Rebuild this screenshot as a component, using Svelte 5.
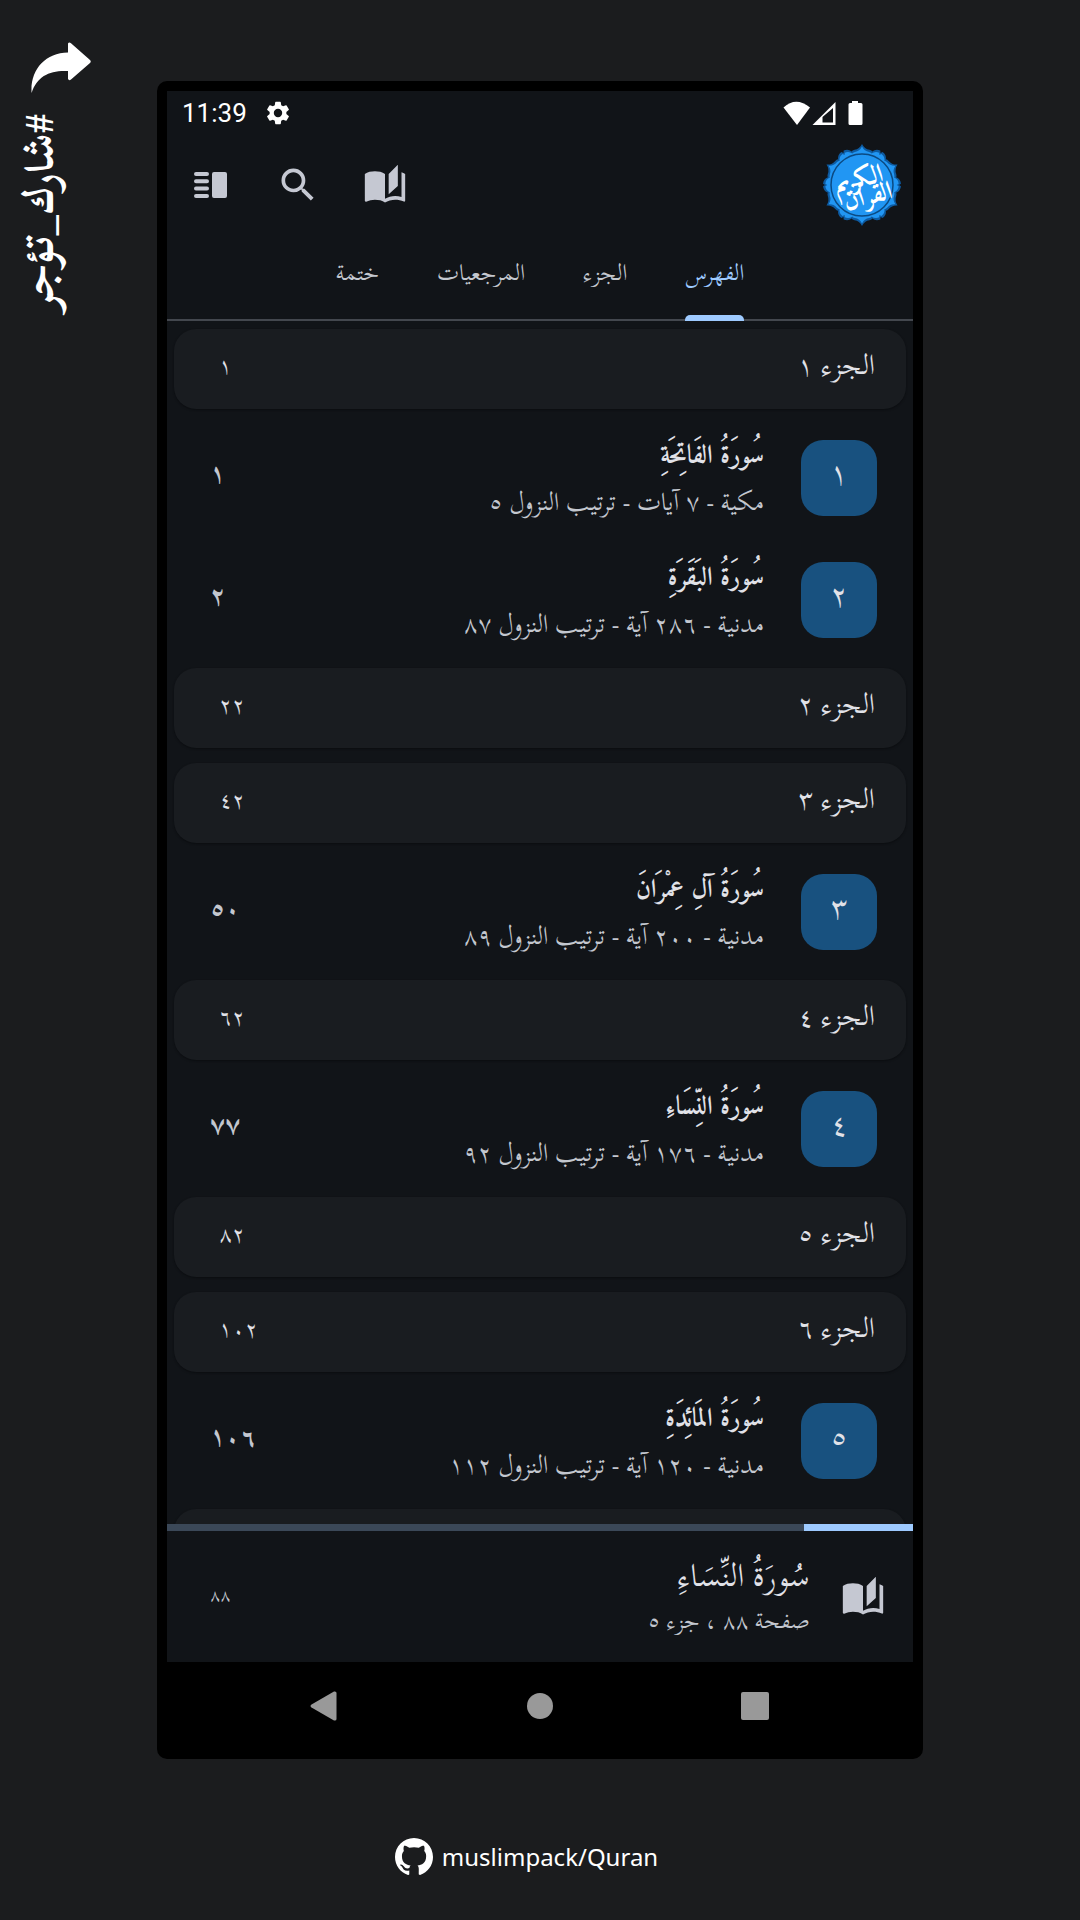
<script>
  const tabs = ['الفهرس', 'الجزء', 'المرجعيات', 'ختمة'];
  let active = $state(0);

  const rows = [
    { juz: '١', page: '١' },
    { no: '١', name: 'سُورَةُ الفَاتِحَةِ', info: 'مكية - ٧ آيات - ترتيب النزول ٥', page: '١' },
    { no: '٢', name: 'سُورَةُ البَقَرَةِ', info: 'مدنية - ٢٨٦ آية - ترتيب النزول ٨٧', page: '٢' },
    { juz: '٢', page: '٢٢' },
    { juz: '٣', page: '٤٢' },
    { no: '٣', name: 'سُورَةُ آلِ عِمْرَانَ', info: 'مدنية - ٢٠٠ آية - ترتيب النزول ٨٩', page: '٥٠' },
    { juz: '٤', page: '٦٢' },
    { no: '٤', name: 'سُورَةُ النِّسَاءِ', info: 'مدنية - ١٧٦ آية - ترتيب النزول ٩٢', page: '٧٧' },
    { juz: '٥', page: '٨٢' },
    { juz: '٦', page: '١٠٢' },
    { no: '٥', name: 'سُورَةُ المَائِدَةِ', info: 'مدنية - ١٢٠ آية - ترتيب النزول ١١٢', page: '١٠٦' }
  ];

  // Six-pointed ornamental outline of the emblem, scaled by k.
  function emblem(k) {
    const at = (deg, r) => {
      const a = ((deg - 90) * Math.PI) / 180;
      return `${(Math.cos(a) * r * k).toFixed(2)} ${(Math.sin(a) * r * k).toFixed(2)}`;
    };
    let d = `M${at(0, 41)}`;
    for (let i = 0; i < 6; i++) {
      const b = i * 60;
      d += `Q${at(b + 4, 36)} ${at(b + 12, 36)}Q${at(b + 16, 36)} ${at(b + 17, 35)}`;
      d += `Q${at(b + 21, 39)} ${at(b + 28, 39)}L${at(b + 30, 37)}L${at(b + 32, 39)}Q${at(b + 39, 39)} ${at(b + 43, 35)}`;
      d += `Q${at(b + 44, 36)} ${at(b + 48, 36)}Q${at(b + 56, 36)} ${at(b + 60, 41)}`;
    }
    return d + 'Z';
  }
</script>

{#snippet book()}
  <svg class="icon" viewBox="0 0 24 24" aria-hidden="true">
    <path d="M19 1l-5 5v11l5-4.5V1zM1 6v14.65c0 .25.25.5.5.5.1 0 .15-.05.25-.05C3.1 20.45 5.05 20 6.5 20c1.95 0 4.05.4 5.5 1.5V6c-1.45-1.1-3.55-1.5-5.5-1.5S2.45 4.9 1 6zm22 13.5V6c-.6-.45-1.25-.75-2-1v13.5c-1.1-.35-2.3-.5-3.5-.5-1.7 0-4.15.65-5.5 1.5v2c1.35-.85 3.8-1.5 5.5-1.5 1.65 0 3.35.3 4.75 1.05.1.05.15.05.25.05.25 0 .5-.25.5-.5z" />
  </svg>
{/snippet}

<div class="page">
  <aside class="share">
    <svg viewBox="0 0 60 52" class="arrow" aria-hidden="true">
      <path d="M37 1.500Q38-.3 40 1.200L59 18Q60.500 19.500 59 21L40 37.500Q38 39 37 37V29C19 28 6 34 .6 51C-1 28 14 11 37 10.500Z" />
    </svg>
    <p class="hashtag" dir="rtl">#شارك_تؤجر</p>
  </aside>

  <main class="phone">
    <div class="screen">
      <div class="status">
        <time>11:39</time>
        <svg class="gear" viewBox="0 0 24 24" aria-hidden="true">
          <path d="M19.140 12.940c.04-.3.060-.61.060-.94 0-.32-.02-.64-.07-.94l2.030-1.580a.49.49 0 0 0 .12-.61l-1.920-3.320a.49.49 0 0 0-.59-.22l-2.390.96c-.5-.38-1.030-.7-1.620-.94l-.36-2.540a.48.48 0 0 0-.48-.41h-3.840c-.24 0-.43.17-.47.41l-.36 2.540c-.59.24-1.130.57-1.620.94l-2.390-.96a.48.48 0 0 0-.59.22L2.740 8.870c-.12.210-.08.470.12.610l2.030 1.580c-.05.3-.09.63-.09.940s.02.640.07.940l-2.030 1.580a.49.49 0 0 0-.12.610l1.920 3.320c.12.220.37.290.59.220l2.390-.96c.5.380 1.030.7 1.620.940l.36 2.540c.05.240.24.410.48.410h3.840c.24 0 .44-.17.470-.41l.36-2.540c.59-.24 1.130-.56 1.620-.94l2.390.960c.22.080.47 0 .59-.22l1.920-3.320a.48.48 0 0 0-.12-.61zM12 15.600a3.600 3.600 0 1 1 0-7.200 3.600 3.600 0 0 1 0 7.200z" />
        </svg>
        <svg class="signals" viewBox="0 0 80 24" aria-hidden="true">
          <path d="M14 24L.5 6.500Q13-5 27 6.500Z" />
          <path fill-rule="evenodd" d="M52.500 1V24H29.500ZM50 7L39.500 16V21.500H50Z" />
          <path d="M69 0h6v2h3q1.500 0 1.500 1.500v19q0 1.500-1.500 1.500h-11q-1.500 0-1.500-1.500v-19q0-1.500 1.500-1.500h2z" />
        </svg>
      </div>

      <header class="appbar">
        <button aria-label="لوحة جانبية">
          <svg class="icon" viewBox="0 0 44 44" aria-hidden="true">
            <path d="M7 9h11a2 2 0 0 1 0 4H7a2 2 0 0 1 0-4zm0 7.300h11a2 2 0 0 1 0 4H7a2 2 0 0 1 0-4zm0 7.300h11a2 2 0 0 1 0 4H7a2 2 0 0 1 0-4zm0 7.300h11a2 2 0 0 1 0 4H7a2 2 0 0 1 0-4zM25 9h11a2 2 0 0 1 2 2v22a2 2 0 0 1-2 2H25a2 2 0 0 1-2-2V11a2 2 0 0 1 2-2z" />
          </svg>
        </button>
        <button aria-label="بحث">
          <svg class="icon" viewBox="0 0 24 24" aria-hidden="true">
            <path d="M9.500 3A6.500 6.500 0 0 1 16 9.500c0 1.610-.59 3.090-1.560 4.230l.27.270h.79l5 5-1.500 1.500-5-5v-.79l-.27-.27A6.516 6.516 0 0 1 9.500 16a6.500 6.500 0 0 1 0-13m0 2C7 5 5 7 5 9.500S7 14 9.500 14 14 12 14 9.500 12 5 9.500 5z" />
          </svg>
        </button>
        <button aria-label="المصحف">{@render book()}</button>
        <svg class="logo" viewBox="-42 -42 84 84" role="img" aria-label="القرآن الكريم">
          <path d={emblem(1)} fill="#0d5aa0" />
          <path d={emblem(0.94)} fill="#2196f3" />
          <circle r="31" fill="#2196f3" stroke="#0b4a82" stroke-width="1.500" />
          <g class="callig">
            <text x="-2" y="1" font-size="26" transform="rotate(-14)">الكريم</text>
            <text x="3" y="20" font-size="26" transform="rotate(-14)">القرآن</text>
          </g>
        </svg>
      </header>

      <nav class="tabs" dir="rtl">
        {#each tabs as tab, i}
          <button class:active={active === i} onclick={() => (active = i)}>{tab}</button>
        {/each}
      </nav>

      <ul class="list" dir="rtl">
        {#each rows as row}
          {#if row.juz}
            <li class="juz">
              <span>الجزء {row.juz}</span>
              <span class="juz-page">{row.page}</span>
            </li>
          {:else}
            <li>
              <a class="surah" href="#surah">
                <span class="badge">{row.no}</span>
                <span class="body">
                  <strong>{row.name}</strong>
                  <span class="info">{row.info}</span>
                </span>
                <span class="surah-page">{row.page}</span>
              </a>
            </li>
          {/if}
        {/each}
        <li class="juz" aria-hidden="true"></li>
      </ul>

      <section class="reading" dir="rtl">
        <div class="track"><div class="fill"></div></div>
        <a class="current" href="#current">
          {@render book()}
          <span class="body">
            <span class="title">سُورَةُ النِّسَاءِ</span>
            <span class="current-info">صفحة ٨٨ ، جزء ٥</span>
          </span>
          <span class="current-page">٨٨</span>
        </a>
      </section>
    </div>

    <nav class="system">
      <button aria-label="Back"><svg viewBox="0 0 30 30"><path d="M24 .5Q26.500 0 26.500 2V28Q26.500 30 24 29.500L1.500 16.500Q-.5 15 1.500 13.500Z" /></svg></button>
      <button aria-label="Home"><svg viewBox="0 0 30 30"><circle cx="15" cy="15" r="13" /></svg></button>
      <button aria-label="Recents"><svg viewBox="0 0 30 30"><rect x="1" y="1" width="28" height="28" rx="2" /></svg></button>
    </nav>
  </main>

  <footer class="credit">
    <svg viewBox="0 0 16 16" aria-hidden="true">
      <path d="M8 0C3.580 0 0 3.580 0 8c0 3.540 2.290 6.530 5.470 7.590.4.070.55-.17.550-.38 0-.19-.01-.82-.01-1.490-2.010.370-2.530-.49-2.690-.94-.09-.23-.48-.94-.82-1.130-.28-.15-.68-.52-.01-.53.630-.01 1.080.580 1.230.820.720 1.210 1.870.870 2.330.660.070-.52.280-.87.510-1.070-1.780-.2-3.640-.89-3.640-3.950 0-.87.310-1.590.820-2.150-.08-.2-.36-1.020.080-2.120 0 0 .67-.21 2.200.820.640-.18 1.320-.27 2-.27s1.360.090 2 .270c1.530-1.040 2.200-.82 2.200-.82.440 1.100.160 1.920.080 2.120.510.560.820 1.270.820 2.150 0 3.070-1.870 3.750-3.650 3.950.290.250.540.730.540 1.480 0 1.070-.01 1.930-.01 2.200 0 .210.150.460.550.380A8.010 8.010 0 0 0 16 8c0-4.420-3.580-8-8-8z" />
    </svg>
    <span>muslimpack/Quran</span>
  </footer>
</div>

<style>
  :global(body) {
    background: #1b1c1e;
  }

  .page {
    display: grid;
    grid-template-columns: 157px minmax(0, 1fr) 157px;
    grid-template-rows: minmax(0, 1fr) 161px;
    height: 100vh;
    color: #e1e2e8;
    font-family: 'Scheherazade New', Scheherazade, Amiri, 'DejaVu Sans', serif;
  }

  button {
    padding: 0;
    border: 0;
    background: none;
    color: inherit;
    font: inherit;
    cursor: pointer;
  }

  a {
    color: inherit;
    text-decoration: none;
  }

  svg {
    display: block;
    fill: currentColor;
  }

  .share {
    display: flex;
    flex-direction: column;
    align-items: flex-start;
    gap: 20px;
    padding: 42px 0 0 31px;
    color: #fff;
  }

  .arrow {
    width: 60px;
    height: 52px;
  }

  .hashtag {
    margin: 0;
    writing-mode: vertical-rl;
    transform: rotate(180deg);
    font-size: 42px;
    font-weight: 700;
    line-height: 18px;
    white-space: nowrap;
  }

  .phone {
    display: flex;
    flex-direction: column;
    margin-top: 81px;
    padding: 10px;
    border-radius: 10px;
    background: #000;
  }

  .screen {
    display: flex;
    flex: 1;
    flex-direction: column;
    min-height: 0;
    background: #111418;
  }

  .status {
    display: flex;
    align-items: center;
    gap: 17px;
    height: 44px;
    padding: 0 50px 0 15px;
    color: #fff;
    font: 26px/44px Roboto, sans-serif;
  }

  .gear {
    width: 28px;
    height: 28px;
  }

  .signals {
    width: 80px;
    height: 24px;
    margin-left: auto;
  }

  .appbar {
    display: flex;
    align-items: center;
    gap: 43px;
    height: 100px;
    padding: 0 9px 0 22px;
    color: #c5c8d2;
  }

  .icon {
    flex: none;
    width: 44px;
    height: 44px;
  }

  .logo {
    width: 84px;
    height: 84px;
    margin-left: auto;
  }

  .callig {
    fill: #fff;
    font-family: Amiri, serif;
    font-weight: 700;
    text-anchor: middle;
  }

  .tabs {
    display: flex;
    justify-content: center;
    gap: 58px;
    height: 84px;
    border-bottom: 2px solid #43474e;
    color: #c3c7cf;
    font-size: 23px;
    line-height: 40px;
  }

  .tabs button {
    position: relative;
    padding-bottom: 8px;
  }

  .tabs .active {
    color: #9ecaff;
  }

  .tabs .active::after {
    position: absolute;
    right: 0;
    bottom: -2px;
    left: 0;
    height: 6px;
    border-radius: 5px 5px 0 0;
    background: #9ecaff;
    content: '';
  }

  .list {
    display: flex;
    flex: 1;
    flex-direction: column;
    min-height: 0;
    margin: 0;
    padding: 1px 0 0;
    overflow: hidden;
    list-style: none;
  }

  .list li {
    flex: none;
  }

  .juz {
    display: flex;
    align-items: center;
    justify-content: space-between;
    box-sizing: border-box;
    height: 80px;
    margin: 7px 7px 8px;
    padding: 0 31px 8px 45px;
    border-radius: 22px;
    background: #191c20;
    box-shadow: 0 1px 2px #0b0d10;
    font-size: 28px;
    line-height: 40px;
  }

  .juz-page {
    padding-top: 2px;
    font-size: 23px;
  }

  .surah,
  .current {
    display: flex;
    align-items: center;
  }

  .surah {
    gap: 37px;
    height: 122px;
    padding: 0 36px 0 43px;
  }

  .badge {
    display: grid;
    place-items: center;
    box-sizing: border-box;
    flex: none;
    width: 76px;
    height: 76px;
    padding-bottom: 10px;
    border-radius: 22px;
    background: #18517f;
    font-size: 32px;
    line-height: 40px;
  }

  .body {
    display: flex;
    flex: 1;
    flex-direction: column;
    gap: 2px;
    line-height: 40px;
    white-space: nowrap;
  }

  strong,
  .title {
    line-height: 46px;
  }

  strong {
    font-family: Amiri, serif;
    font-size: 26px;
  }

  .info {
    color: #c3c7cf;
    font-size: 25px;
  }

  .surah-page {
    padding-bottom: 8px;
    color: #c3c7cf;
    font-size: 26px;
    font-weight: 700;
    line-height: 40px;
  }

  .track {
    height: 7px;
    background: #3b4858;
  }

  .fill {
    width: 14.6%;
    height: 100%;
    background: #9ecaff;
  }

  .current {
    gap: 31px;
    height: 131px;
    padding: 0 28px 0 43px;
  }

  .current .icon {
    color: #c5c8d2;
  }

  .title {
    font-size: 32px;
  }

  .current-info {
    color: #c3c7cf;
    font-size: 23px;
  }

  .current-page {
    padding-bottom: 4px;
    color: #c3c7cf;
    font-size: 18px;
  }

  .system {
    display: flex;
    justify-content: center;
    gap: 185px;
    padding: 29px 0 28px;
    color: #999;
  }

  .system svg {
    width: 30px;
    height: 30px;
  }

  .credit {
    display: flex;
    grid-column: 2;
    align-items: center;
    justify-content: center;
    gap: 9px;
    height: 38px;
    padding: 79px 27px 0 0;
    color: #fff;
    font: 24px/38px 'Noto Sans', sans-serif;
  }

  .credit svg {
    width: 38px;
    height: 38px;
  }
</style>
